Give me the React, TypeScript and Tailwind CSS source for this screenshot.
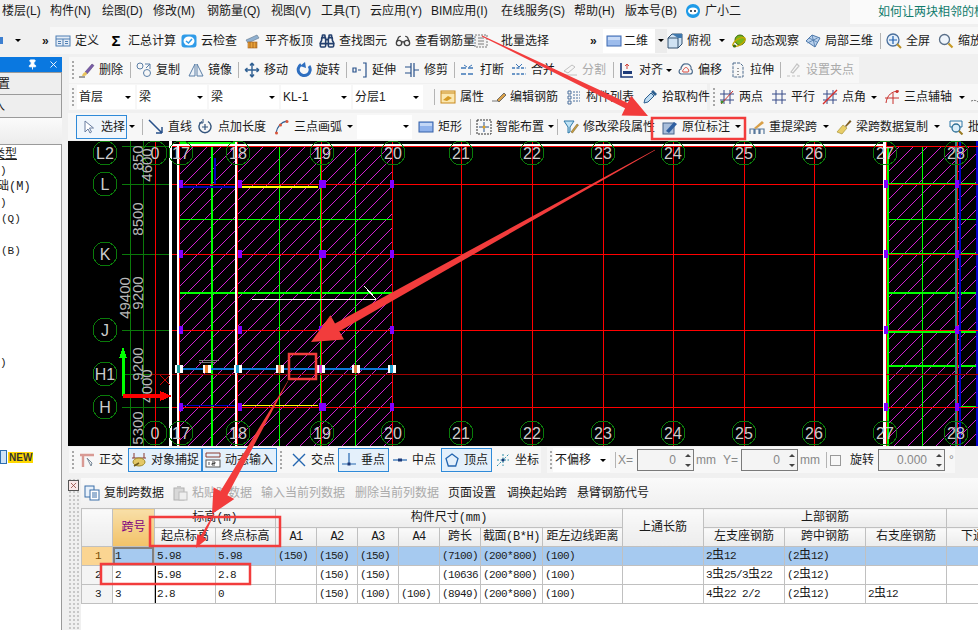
import type { ReactNode } from "react";
import { Binoculars, Glasses, Pin, X } from "lucide-react";

type ToolProps = {
  icon?: ReactNode;
  label: string;
  w: string;
  gray?: boolean;
  caret?: string;
};

const I = ({ children }: { children: ReactNode }) => (
  <svg viewBox="0 0 16 16" className="h-4 w-4 shrink-0" fill="none">
    {children}
  </svg>
);

const icons: Record<string, ReactNode> = {
  define: (
    <I>
      <rect x="1" y="3" width="14" height="10" fill="#e4ecf6" stroke="#4f7fb3" />
      <path d="M1 6h14M8 6v7M3 8.5h3M3 10.5h3M10 8.5h3M10 10.5h3" stroke="#4f7fb3" />
    </I>
  ),
  sigma: <span className="block w-4 text-center text-[15px] leading-none font-bold text-black">Σ</span>,
  cloud: (
    <I>
      <rect x="0.5" y="1.5" width="15" height="13" rx="3" fill="#2f9be8" />
      <ellipse cx="8" cy="8" rx="5.5" ry="4.5" fill="#fff" />
      <path d="M5 8l2.5 2L11 6" stroke="#2f9be8" strokeWidth="1.5" />
    </I>
  ),
  slab: (
    <I>
      <path d="M1 7l11-5 2 3-11 5z" fill="#8fb0d0" stroke="#60758c" strokeWidth="0.6" />
      <rect x="3" y="9" width="9" height="6" fill="#e8a23a" stroke="#a8611a" strokeWidth="0.6" />
      <path d="M5 9v6M8 9v6M11 9v6" stroke="#8a4a12" strokeWidth="0.6" />
    </I>
  ),
  find: <Binoculars size={16} color="#24406e" strokeWidth={2.4} className="shrink-0" />,
  glasses: <Glasses size={16} color="#444" strokeWidth={2} className="shrink-0" />,
  batch: (
    <I>
      <rect x="2" y="2" width="12" height="12" fill="#f2f2f2" stroke="#7a7a7a" strokeDasharray="2 1" />
      <path d="M5 5h6M5 8h6M5 11h6" stroke="#7a7a7a" />
    </I>
  ),
  plane: (
    <I>
      <rect x="1" y="3" width="14" height="10" fill="#9dbcec" stroke="#3c68b0" />
      <rect x="2" y="4" width="12" height="3" fill="#c9dbf6" />
    </I>
  ),
  cube: (
    <I>
      <path d="M1 5l4-4h10v10l-4 4H1z" fill="#cfe2f3" stroke="#33516f" />
      <path d="M1 5h10v10M11 5l4-4" stroke="#33516f" />
      <path d="M5 1h10v4H11z" fill="#3f78ad" />
    </I>
  ),
  orbit: (
    <I>
      <circle cx="9" cy="7" r="5" fill="#7cb518" stroke="#3d6b10" />
      <ellipse cx="8" cy="9" rx="7" ry="3" transform="rotate(-32 8 9)" stroke="#c6a700" strokeWidth="1.4" />
      <circle cx="3.5" cy="13" r="1.6" fill="#3d6b10" />
    </I>
  ),
  local3d: (
    <I>
      <path d="M1 8l6-6 8 3-5 9z" fill="#b8d0ec" stroke="#4d78aa" />
      <path d="M4 5l8 4M7 2l3 12M2.5 10l10-5" stroke="#4d78aa" strokeWidth="0.8" />
    </I>
  ),
  full: (
    <I>
      <circle cx="7" cy="7" r="6" fill="#e4effa" stroke="#4a6f9c" strokeWidth="1.3" />
      <path d="M7 3v8M3 7h8" stroke="#1f5fae" strokeWidth="1.2" />
      <path d="M11 11l4 4" stroke="#b98f25" strokeWidth="2" />
    </I>
  ),
  zoom: (
    <I>
      <circle cx="6.5" cy="6.5" r="5" fill="#eef4fb" stroke="#5a6f88" strokeWidth="1.3" />
      <path d="M10.5 10.5l4 4" stroke="#c79a24" strokeWidth="2.2" />
    </I>
  ),
  brush: (
    <I>
      <path d="M6 10l7-8 2 1.5L8 12z" fill="#7a5ca8" stroke="#4a3a70" strokeWidth="0.5" />
      <path d="M3 14c1-3 2-4 4-4l1 2c-1 2-3 2-5 2z" fill="#e8c25a" />
      <path d="M0 15h6" stroke="#444" />
    </I>
  ),
  copy: (
    <I>
      <circle cx="4" cy="4" r="3" stroke="#5a7ea6" />
      <circle cx="11" cy="11" r="3.5" stroke="#5a7ea6" />
      <path d="M9 2h5v5M14 2l-4 4" stroke="#5a7ea6" />
    </I>
  ),
  mirror: (
    <I>
      <path d="M7 2L1 14h6zM9 2l6 12H9z" stroke="#5a7ea6" fill="#eef3f9" />
    </I>
  ),
  move: (
    <I>
      <path d="M8 1v14M1 8h14M8 1L6 3.5M8 1l2 2.5M8 15l-2-2.5M8 15l2-2.5M1 8l2.5-2M1 8l2.5 2M15 8l-2.5-2M15 8l-2.5 2" stroke="#2f5f92" strokeWidth="1.4" />
    </I>
  ),
  rotate: (
    <I>
      <path d="M5 2.5A6 6 0 1 0 13 4" stroke="#2f6fc0" strokeWidth="3" />
      <path d="M9 0l1 6-6-2z" fill="#2f6fc0" />
    </I>
  ),
  extend: (
    <I>
      <path d="M1 6h3v4H1zM6 8h3M11 1h3v14h-3" stroke="#27508a" strokeWidth="1.2" />
    </I>
  ),
  trim: (
    <I>
      <path d="M1 5h6M1 11h6M7 1v14M10 1v14M10 8h5" stroke="#27508a" strokeWidth="1.2" />
    </I>
  ),
  breakIcon: (
    <I>
      <path d="M1 6h14M1 12h14" stroke="#3f78b8" strokeDasharray="5 2" strokeWidth="1.4" />
      <path d="M4 3l3 2M12 3L9 5" stroke="#3f78b8" />
    </I>
  ),
  merge: (
    <I>
      <path d="M1 6h14M1 12h14" stroke="#3f78b8" strokeDasharray="3 1.5" strokeWidth="1.4" />
      <path d="M5 2l3 3 3-3" stroke="#3f78b8" />
    </I>
  ),
  split: (
    <I>
      <path d="M1 13h14M2 9l8-6 3 2-7 6z" stroke="#c0c0c0" />
    </I>
  ),
  align: (
    <I>
      <path d="M2 1v14h12" stroke="#1d3a78" strokeWidth="1.6" />
      <rect x="4" y="9" width="9" height="3" fill="#1d3a78" />
      <path d="M8 7V2M6 4l2-2 2 2" stroke="#d2443a" />
    </I>
  ),
  offset: (
    <I>
      <path d="M3 12c-3-1-2-5 0-5 0-3 3-6 5-5 3-1 6 3 5 5 2 1 2 5-1 5z" stroke="#4c6b8c" strokeWidth="1.2" />
      <path d="M5 10c-1-1 0-2 1-3 1-2 3-2 4 0 1 1 1 3 0 3z" stroke="#d8453a" />
    </I>
  ),
  stretch: (
    <I>
      <path d="M3 1h7l3 3v11H3z" stroke="#4c6b8c" strokeDasharray="3 1" />
      <path d="M8 6v1M8 9v1M8 12v1" stroke="#333" />
    </I>
  ),
  grips: (
    <I>
      <path d="M1 14h3M6 14h3M11 14h3M5 10l6-8 2 2-6 7z" stroke="#c4c4c4" strokeWidth="1.2" />
    </I>
  ),
  props: (
    <I>
      <rect x="1" y="2" width="14" height="12" fill="#fbe7b0" stroke="#c98a1e" />
      <path d="M3 11l5-4 4 2-5 3z" fill="#d69a24" />
      <path d="M1 4h14" stroke="#c98a1e" />
    </I>
  ),
  pencil: (
    <I>
      <path d="M0 12h6M5 11l7-7 2 2-7 7z" stroke="#555" fill="#d9a048" strokeWidth="0.8" />
    </I>
  ),
  list: (
    <I>
      <path d="M2 2h3v3H2zM2 7h3v3H2zM2 12h3v3H2z" stroke="#4a6f9c" />
      <path d="M7 3h7M7 6h7M7 9h7M7 12h7" stroke="#4a6f9c" strokeDasharray="2 1" />
    </I>
  ),
  picker: (
    <I>
      <path d="M2 14l1-4 6-6 3 3-6 6z" fill="#bfdcf2" stroke="#2c5f8f" />
      <path d="M9 3l2-2 4 4-2 2z" fill="#2c5f8f" />
    </I>
  ),
  twoPoint: (
    <I>
      <path d="M5 1v14M11 1v14M1 5h14M1 11h14" stroke="#364b88" />
      <path d="M2 15L14 2" stroke="#c9302c" />
      <circle cx="3" cy="13" r="1.5" fill="#3f8f2f" />
    </I>
  ),
  parallel: (
    <I>
      <path d="M5 1v14M11 1v14M1 5h14M1 11h14" stroke="#364b88" />
    </I>
  ),
  angle: (
    <I>
      <path d="M5 1v14M11 1v14M1 5h14M1 11h14" stroke="#364b88" />
      <path d="M1 15L15 1" stroke="#d8302c" strokeWidth="1.4" />
    </I>
  ),
  arcAxis: (
    <I>
      <path d="M2 14C3 6 8 2 15 2M1 9h14M9 4v11" stroke="#c8302c" />
      <circle cx="13" cy="2.5" r="1.5" fill="#c8302c" />
    </I>
  ),
  wave: (
    <I>
      <path d="M1 12c3-1 5-1 7 1M12 5v8" stroke="#777" strokeDasharray="2 1" />
    </I>
  ),
  cursor: (
    <I>
      <path d="M4 2v11l3-3 2 4 1.5-1-2-4h4z" fill="#fff" stroke="#6a7ea0" />
    </I>
  ),
  line: (
    <I>
      <path d="M1 1l13 13M14 14H8M14 14V8" stroke="#27508a" strokeWidth="1.5" />
    </I>
  ),
  addLength: (
    <I>
      <path d="M10 2.5a6 6 0 1 1-6 0" stroke="#33547c" strokeWidth="1.4" />
      <path d="M5 0v4H1" stroke="#33547c" />
      <path d="M7 5v6M4 8h6" stroke="#33547c" strokeWidth="1.2" />
    </I>
  ),
  arc: (
    <I>
      <path d="M2 14C3 8 7 3 13 2" stroke="#2f5f92" strokeWidth="1.3" />
      <circle cx="2.5" cy="14" r="1.5" fill="#d8553a" />
      <circle cx="6.5" cy="6" r="1.5" fill="#d8553a" />
      <circle cx="13" cy="2.5" r="1.5" fill="#d8553a" />
    </I>
  ),
  rect: (
    <I>
      <rect x="1" y="3" width="14" height="10" fill="#8fb2ec" stroke="#3560a8" />
      <rect x="2" y="4" width="12" height="3" fill="#c3d7f6" />
    </I>
  ),
  smart: (
    <I>
      <rect x="1" y="1" width="14" height="14" stroke="#333" strokeDasharray="2 1" />
      <path d="M8 3v10M3 8h10" stroke="#27508a" />
      <circle cx="8" cy="8" r="1.5" fill="#e0a020" />
    </I>
  ),
  filterEdit: (
    <I>
      <path d="M1 2h10L7 8v5l-2 1V8z" fill="#bfe3f5" stroke="#2d78a8" />
      <path d="M8 13l6-8 1.5 1-6 8z" fill="#c9a040" stroke="#6b5420" strokeWidth="0.5" />
    </I>
  ),
  inplace: (
    <I>
      <rect x="1" y="4" width="11" height="11" fill="#a9bfdc" stroke="#46648c" />
      <path d="M4 12l8-9 3 2-8 9z" fill="#2f5fa0" />
    </I>
  ),
  respan: (
    <I>
      <path d="M1 15v-5h4v5M6 15v-5h4v5M11 15v-5h4v5" stroke="#58789c" strokeWidth="1.2" />
      <path d="M5 9l8-7 2 2-8 6z" fill="#d9a048" />
    </I>
  ),
  broom: (
    <I>
      <path d="M9 7l5-6 1.5 1.5L10 8z" fill="#7b5a20" />
      <path d="M1 13l6-7 4 3-5 6z" fill="#e8cd68" stroke="#a08a28" strokeWidth="0.6" />
    </I>
  ),
  batchMod: (
    <I>
      <path d="M2 2h12v6H2z" stroke="#2d78a8" />
      <circle cx="8" cy="9" r="4" fill="#dbeef9" stroke="#2d6f96" strokeWidth="1.3" />
      <path d="M11 12l3.5 3.5" stroke="#9a7a20" strokeWidth="2" />
    </I>
  ),
  ortho: (
    <I>
      <path d="M1 3h14M4 3v12" stroke="#d99a94" strokeWidth="2.4" />
      <path d="M8 6l5 5-1 3z" stroke="#7a8a9a" />
    </I>
  ),
  snap: (
    <I>
      <path d="M3 1v5M13 1v5M1 6h14" stroke="#8a3a30" />
      <ellipse cx="8" cy="10" rx="6" ry="4" fill="#e3c868" stroke="#a08a28" />
      <path d="M3 14l5-3" stroke="#6f5a1a" strokeWidth="1.5" />
    </I>
  ),
  dynamic: (
    <I>
      <path d="M1 1h14v4H1z" stroke="#8a3a30" />
      <rect x="1" y="8" width="14" height="7" fill="#fff" stroke="#555" />
      <path d="M4 10v3M7 10h3v1.5H7V13h3" stroke="#222" strokeWidth="0.8" />
    </I>
  ),
  cross: (
    <I>
      <path d="M2 2l12 12M14 2L2 14" stroke="#2466b0" strokeWidth="1.4" />
    </I>
  ),
  foot: (
    <I>
      <path d="M8 1v11M1 12h14" stroke="#2466b0" strokeWidth="1.2" />
      <rect x="6.5" y="10.5" width="3" height="3" fill="#1d3a78" />
    </I>
  ),
  mid: (
    <I>
      <path d="M1 8h14" stroke="#2466b0" strokeWidth="1.2" />
      <rect x="6" y="6.5" width="4" height="3" fill="#1d3a78" />
    </I>
  ),
  vertex: (
    <I>
      <path d="M8 2l6 4.5-2.3 7.5H4.3L2 6.5z" stroke="#2466b0" strokeWidth="1.3" />
    </I>
  ),
  coord: (
    <I>
      <path d="M2 14L14 2M2 8h12M8 2v12" stroke="#2a8fa8" strokeDasharray="2 1.5" />
      <circle cx="8" cy="8" r="1.5" fill="#1d3a78" />
    </I>
  ),
  copyDoc: (
    <I>
      <rect x="1" y="1" width="9" height="11" fill="#e8f1fb" stroke="#3a6ea8" />
      <rect x="6" y="5" width="9" height="10" fill="#fff" stroke="#3a6ea8" />
      <path d="M8 8h5M8 10h5M8 12h5" stroke="#3a6ea8" />
    </I>
  ),
  pasteDoc: (
    <I>
      <rect x="2" y="3" width="10" height="12" fill="#d8d8d8" stroke="#b0b0b0" />
      <rect x="5" y="1" width="4" height="3" fill="#c8c8c8" />
      <rect x="7" y="7" width="8" height="8" fill="#efefef" stroke="#bcbcbc" />
    </I>
  ),
};

const Caret = ({ className = "ml-[6px]" }: { className?: string }) => (
  <span className={`${className} h-0 w-0 shrink-0 border-x-[3px] border-t-[3px] border-x-transparent border-t-black`} />
);

const Sep = () => (
  <div className="flex h-full w-[6px] shrink-0 items-center">
    <div className="h-[16px] w-px bg-[#b4b4b4]" />
  </div>
);

const Grip = ({ w = "w-[10px]" }: { w?: string }) => (
  <div className={`flex h-full shrink-0 items-center pl-[3px] ${w}`}>
    <div className="h-[18px] w-[2px] bg-[repeating-linear-gradient(to_bottom,#a8a8a8_0_2px,transparent_2px_4px)]" />
  </div>
);

function Tool({ icon, label, w, gray, caret }: ToolProps) {
  return (
    <div className={`flex h-full shrink-0 items-center ${w}`}>
      {icon ? <div className="flex w-[20px] shrink-0 items-center">{icons[icon as string]}</div> : null}
      <span className={`text-[12px] leading-none whitespace-nowrap ${gray ? "text-[#aaaaaa]" : "text-[#1a1a1a]"}`}>
        {label}
      </span>
      {caret ? <Caret className={caret} /> : null}
    </div>
  );
}

const Select = ({ label, w }: { label: string; w: string }) => (
  <div className={`mr-[2px] flex h-[24px] shrink-0 items-center justify-between bg-white pr-[4px] pl-[2px] ${w}`}>
    <span className="text-[12px] leading-none">{label}</span>
    <Caret className="ml-0" />
  </div>
);

const menus = [
  ["楼层(L)", "w-[48px]"],
  ["构件(N)", "w-[52px]"],
  ["绘图(D)", "w-[51px]"],
  ["修改(M)", "w-[54px]"],
  ["钢筋量(Q)", "w-[64px]"],
  ["视图(V)", "w-[50px]"],
  ["工具(T)", "w-[49px]"],
  ["云应用(Y)", "w-[61px]"],
  ["BIM应用(I)", "w-[70px]"],
  ["在线服务(S)", "w-[73px]"],
  ["帮助(H)", "w-[51px]"],
  ["版本号(B)", "w-[60px]"],
];

const Spin = ({ value, w }: { value: string; w: string }) => (
  <div className={`flex h-[22px] shrink-0 items-center justify-end border border-[#7a7a7a] bg-[#f4f4f4] pr-[2px] ${w}`}>
    <span className="text-[12px] leading-none text-[#888888]">{value}</span>
    <div className="ml-[9px] flex flex-col gap-[7px]">
      <span className="block h-0 w-0 border-x-[3px] border-b-[3px] border-x-transparent border-b-[#444]" />
      <span className="block h-0 w-0 border-x-[3px] border-t-[3px] border-x-transparent border-t-[#444]" />
    </div>
  </div>
);

const rows = [
  ["1", "1", "5.98", "5.98", "(150)", "(150)", "(150)", "", "(7100)", "(200*800)", "(100)", "", "2虫12", "(2虫12)", "", ""],
  ["2", "2", "5.98", "2.8", "", "(150)", "(150)", "", "(10636", "(200*800)", "(100)", "", "3虫25/3虫22", "(2虫12)", "", ""],
  ["3", "3", "2.8", "0", "", "(150)", "(100)", "(100)", "(8949)", "(200*800)", "(100)", "", "4虫22 2/2", "(2虫12)", "2虫12", ""],
];

const colWidths = [
  "w-[31px]", "w-[42px]", "w-[61px]", "w-[60px]", "w-[41px]", "w-[41px]", "w-[41px]", "w-[41px]",
  "w-[41px]", "w-[62px]", "w-[80px]", "w-[81px]", "w-[81px]", "w-[81px]", "w-[81px]", "w-[32px]",
];

const th = "border border-[#c0c0c0] bg-[linear-gradient(#fafafa,#ececec)] p-0 text-center text-[12px] font-normal whitespace-nowrap overflow-hidden";

// the rebar grade sign is a full width glyph, it must not get the digits' tighter tracking
function RebarText({ text }: { text: string }) {
  const parts = text.split("虫");
  return (
    <>
      {parts.map((part, i) => (
        <span key={i}>
          {i > 0 ? <span className="text-[12px] tracking-normal">虫</span> : null}
          {part}
        </span>
      ))}
    </>
  );
}

function BeamTable() {
  return (
    <table className="w-[897px] table-fixed border-collapse font-['Liberation_Mono','Noto_Sans_CJK_SC',monospace] text-[11px] tracking-[-0.6px] text-[#1a1a1a]">
      <colgroup>
        {colWidths.map((w, i) => (
          <col key={i} className={w} />
        ))}
      </colgroup>
      <thead>
        <tr className="h-[18px]">
          <th rowSpan={2} className={th} />
          <th rowSpan={2} className="border border-[#c0c0c0] bg-[linear-gradient(#f8dfa8,#f2c268)] p-0 text-center text-[12px] font-normal tracking-normal text-[#800080]">
            跨号
          </th>
          <th colSpan={2} className={`${th} tracking-normal`}>标高(m)</th>
          <th colSpan={7} className={`${th} tracking-normal`}>构件尺寸(mm)</th>
          <th rowSpan={2} className={`${th} tracking-normal`}>上通长筋</th>
          <th colSpan={3} className={`${th} tracking-normal`}>上部钢筋</th>
          <th className={th} />
        </tr>
        <tr className="h-[19px]">
          {["起点标高", "终点标高"].map((t) => (
            <th key={t} className={`${th} tracking-normal`}>{t}</th>
          ))}
          {["A1", "A2", "A3", "A4"].map((t) => (
            <th key={t} className={`${th} text-[11px]`}>{t}</th>
          ))}
          <th className={`${th} tracking-normal`}>跨长</th>
          <th className={`${th} tracking-[-0.4px]`}>截面(B*H)</th>
          <th className={`${th} tracking-normal`}>距左边线距离</th>
          {["左支座钢筋", "跨中钢筋", "右支座钢筋"].map((t) => (
            <th key={t} className={`${th} tracking-normal`}>{t}</th>
          ))}
          <th className={`${th} pl-[14px] text-left tracking-normal`}>下通长筋</th>
        </tr>
      </thead>
      <tbody>
        {rows.map((row, r) => (
          <tr key={r} className={`h-[19px] ${r === 0 ? "bg-[#a6caf0]" : "bg-white"}`}>
            {row.map((cell, c) => {
              let cls = "border border-[#c0c0c0] overflow-hidden whitespace-nowrap p-0 pl-[2px]";
              if (c === 0) {
                cls += r === 0
                  ? " bg-[#fbd592] text-center text-[#7a4a00]"
                  : " bg-[#f4f4f4] text-center";
              }
              if (c === 1 && r === 0) cls += " shadow-[inset_0_0_0_2px_#808080]";
              if (c === 2 && r > 0) cls += " shadow-[inset_1px_0_0_#000]";
              return (
                <td key={c} className={cls}>
                  <RebarText text={cell} />
                </td>
              );
            })}
          </tr>
        ))}
      </tbody>
    </table>
  );
}

const colX = [179, 237, 321, 392, 461, 532, 603, 673, 744, 814, 886, 957];
const bubbleX = [181, 238, 322, 393, 461, 532, 603, 673, 744, 814, 885, 956];
const colLabels = ["17", "18", "19", "20", "21", "22", "23", "24", "25", "26", "27", "28"];
const bubbleRows = [
  { y: 153, label: "L2" },
  { y: 184, label: "L" },
  { y: 254, label: "K" },
  { y: 330, label: "J" },
  { y: 374, label: "H1" },
  { y: 407, label: "H" },
];
const gridRows = [184, 254, 330, 407];

// 45 degree hatch of a slab, one long diagonal every 14px
function hatchPath(x0: number, x1: number, y0: number, y1: number) {
  let d = "";
  for (let c = x0 + y0; c < x1 + y1; c += 14) {
    d += `M${c - y0} ${y0}L${c - y1} ${y1}`;
  }
  return d;
}

function Bubble({ x, y, label }: { x: number; y: number; label: string }) {
  return (
    <g>
      <circle cx={x} cy={y} r="12" fill="none" stroke="#0a7a0a" />
      <text x={x} y={y + 6} textAnchor="middle" fill="#cccccc" fontSize="16" fontFamily="'Liberation Sans',sans-serif">
        {label}
      </text>
    </g>
  );
}

const DimText = ({ x, y, t }: { x: number; y: number; t: string }) => (
  <text
    transform={`translate(${x} ${y}) rotate(-90)`}
    textAnchor="middle"
    fill="#b8b8b8"
    fontSize="15"
    fontFamily="'Liberation Sans',sans-serif"
  >
    {t}
  </text>
);

function Handle({ x, color }: { x: number; color: string }) {
  return (
    <g>
      <rect x={x - 4} y="365" width="8" height="8" fill="#fff" />
      <rect x={x - 2} y="365" width="3" height="8" fill={color} />
    </g>
  );
}

function CadCanvas() {
  return (
    <svg viewBox="68 141 910 305" shapeRendering="crispEdges" className="block h-[305px] w-[910px] shrink-0 bg-black">
      <defs>
        <clipPath id="slabA">
          <rect x="180" y="146" width="212" height="300" />
        </clipPath>
        <clipPath id="slabB">
          <rect x="886" y="146" width="92" height="300" />
        </clipPath>
      </defs>
      <path d={hatchPath(180, 392, 146, 446)} clipPath="url(#slabA)" stroke="#d020d0" strokeWidth="1" />
      <path d={hatchPath(886, 978, 146, 446)} clipPath="url(#slabB)" stroke="#d020d0" strokeWidth="1" />

      {/* dim axes */}
      <path d="M130.5 141v305M143.5 141v305M171.5 141v305" stroke="#0a7a0a" />
      <path d="M122 146.5h50M122 184.5h50M122 254.5h50M122 330.5h50M122 374.5h50M122 407.5h50" stroke="#0a7a0a" />

      {/* bright green members */}
      <g stroke="#00ff00">
        <path d="M212 146v300M321 146v300" strokeWidth="2" />
        <path d="M279.5 146v300M355.5 146v300" />
        <path d="M180 219.5h212M180 407.5h212" />
        <path d="M180 293h212" strokeWidth="2" />
        <path d="M180 143h55" strokeWidth="3" />
        <path d="M887 146v300" strokeWidth="3" />
        <path d="M922.5 146v300M957.5 146v300" />
        <path d="M886 219.5h92" />
        <path d="M886 184h92M886 254h92M886 293h92M886 366h92" strokeWidth="2" />
        <path d="M886 331h92" strokeWidth="3" />
        <path d="M886 407.5h70M957 406h21" />
      </g>

      {/* beams */}
      <path d="M215 158v26" stroke="#0000c0" strokeWidth="2" />
      <path d="M181 187h55" stroke="#0000b0" strokeWidth="2" />
      <path d="M238 187h80" stroke="#ffff00" strokeWidth="2" />
      <path d="M181 405.5h55" stroke="#0000c0" />
      <path d="M238 405.5h80" stroke="#ffff00" />
      <path d="M960 141v305" stroke="#0000d0" strokeWidth="2" />
      <path d="M977 141v305" stroke="#0000d0" strokeWidth="2" />
      <path d="M956 141v305" stroke="#2a8a7a" strokeWidth="2" />

      {/* red axes */}
      <path d="M155.5 141v305" stroke="#ff0000" />
      {colX.map((x) => (
        <path key={x} d={`M${x + 0.5} 141v305`} stroke="#ff0000" />
      ))}
      <path d="M172 146.5h806M172 184.5h806M172 254.5h806M172 330.5h806M172 407.5h806" stroke="#ff0000" />
      <path d="M150 374.5h828" stroke="#a00000" />

      {/* white walls */}
      <path d="M170 141v305M884 141v305" stroke="#fff" strokeWidth="3" />
      <path d="M178 146v300M236 141v305" stroke="#fff" strokeWidth="2" />
      <path d="M170 145h716" stroke="#fff" strokeWidth="2" />
      <path d="M252 299.5h124" stroke="#fff" />
      <path d="M364 286l12 13" stroke="#fff" />

      {/* column stubs */}
      {[181, 240, 321, 392, 886, 957].map((x) =>
        gridRows.map((y) => (
          <rect key={`${x}-${y}`} x={x - 2} y={y - 4} width={x === 321 ? 7 : 4} height="8" fill="#8000ff" />
        )),
      )}

      {/* selected beam */}
      <path d="M180 369h212" stroke="#0a78d8" strokeWidth="2" />
      <path d="M199 360.5h20M199 362.5h16" stroke="#777" />
      <Handle x={179} color="#20a0a0" />
      <Handle x={207} color="#f08030" />
      <Handle x={238} color="#20a0d0" />
      <Handle x={280} color="#e08040" />
      <Handle x={321} color="#d040d0" />
      <Handle x={356} color="#e08040" />
      <Handle x={392} color="#20a0d0" />

      {/* bubbles */}
      {bubbleX.map((x, i) => (
        <g key={x}>
          <Bubble x={x} y={153} label={colLabels[i]} />
          <Bubble x={x} y={433} label={colLabels[i]} />
        </g>
      ))}
      <Bubble x={155} y={153} label="0" />
      <Bubble x={155} y={433} label="0" />
      {bubbleRows.map((b) => (
        <Bubble key={b.label} x={105} y={b.y} label={b.label} />
      ))}

      <DimText x={143} y={158} t="850" />
      <DimText x={152} y={165} t="4600" />
      <DimText x={143} y={219} t="8500" />
      <DimText x={143} y={293} t="9200" />
      <DimText x={130} y={298} t="49400" />
      <DimText x={143} y={364} t="9200" />
      <DimText x={152} y={386} t="4000" />
      <DimText x={143} y={428} t="5300" />

      {/* axis gizmo */}
      <path d="M123 396v-40" stroke="#00ff00" strokeWidth="3" />
      <path d="M123 347l-4 11h8z" fill="#00ff00" />
      <path d="M123 396h38" stroke="#ff0000" strokeWidth="4" />
      <path d="M172 396l-12-5v10z" fill="#ff0000" />
      <path d="M160 375l10 10M170 375l-10 10" stroke="#d00000" />
    </svg>
  );
}

// tail is thin, widens up to the head, like the hand drawn marks in the picture
function arrowPoints(x1: number, y1: number, x2: number, y2: number, tail: number, body: number, head: number, len: number) {
  const d = Math.hypot(x2 - x1, y2 - y1);
  const ux = (x2 - x1) / d;
  const uy = (y2 - y1) / d;
  const nx = -uy;
  const ny = ux;
  const bx = x2 - ux * len;
  const by = y2 - uy * len;
  const pts = [
    [x1 + (nx * tail) / 2, y1 + (ny * tail) / 2],
    [bx + (nx * body) / 2, by + (ny * body) / 2],
    [bx + (nx * head) / 2, by + (ny * head) / 2],
    [x2, y2],
    [bx - (nx * head) / 2, by - (ny * head) / 2],
    [bx - (nx * body) / 2, by - (ny * body) / 2],
    [x1 - (nx * tail) / 2, y1 - (ny * tail) / 2],
  ];
  return pts.map((p) => p.join(",")).join(" ");
}

function Annotations() {
  const red = "#f23c3c";
  return (
    <svg viewBox="0 0 978 630" className="pointer-events-none absolute top-0 left-0 h-[630px] w-[978px]">
      <polygon points={arrowPoints(482, 36, 648, 116, 1, 6, 22, 24)} fill={red} />
      <polygon points={arrowPoints(655, 150, 311, 342, 0.5, 9, 28, 30)} fill={red} />
      <polygon points={arrowPoints(288, 381, 212, 514, 0.5, 8, 24, 24)} fill={red} />
      <polygon points={arrowPoints(214, 514, 196, 548, 1, 3, 11, 13)} fill={red} />
      <g fill="none" stroke={red} strokeWidth="2.5">
        <rect x="652" y="118" width="93" height="21" />
        <rect x="289" y="354" width="27" height="25" />
        <rect x="150" y="517" width="130" height="29" />
        <rect x="101" y="564" width="149" height="20" />
      </g>
    </svg>
  );
}

export default function App() {
  return (
    <div className="relative flex h-[630px] w-[978px] flex-col overflow-hidden bg-[#f0f0f0] font-['Liberation_Sans','Noto_Sans_CJK_SC',sans-serif] text-[12px] text-[#1a1a1a]">
      {/* menu bar */}
      <div className="flex h-[27px] shrink-0">
        <div className="flex h-[21px] flex-1 items-center pl-[2px]">
          {menus.map(([label, w]) => (
            <span key={label} className={`${w} shrink-0 whitespace-nowrap`}>{label}</span>
          ))}
          <svg viewBox="0 0 16 16" className="mr-[4px] h-4 w-4 shrink-0">
            <path d="M8 1c4 0 7 3 7 7 0 3-2 7-7 7s-7-4-7-7c0-4 3-7 7-7z" fill="#1e9be8" />
            <ellipse cx="8" cy="8" rx="5" ry="3.5" fill="#fff" />
            <circle cx="6" cy="8" r="1" fill="#123" />
            <circle cx="10" cy="8" r="1" fill="#123" />
          </svg>
          <span>广小二</span>
        </div>
        <div className="flex h-[24px] w-[128px] shrink-0 items-center overflow-hidden bg-[#fafafa] pl-[28px] whitespace-nowrap text-[#0f7a6c]">
          如何让两块相邻的板
        </div>
      </div>

      {/* main toolbar */}
      <div className="flex h-[27px] shrink-0 items-center">
        <div className="flex h-full w-[50px] shrink-0 items-center">
          <span className="h-full w-[3px] rounded-r bg-[#3d7fd0] [clip-path:inset(10px_0_10px_0)]" />
          <Caret className="ml-[12px]" />
          <span className="ml-[21px] text-[12px] leading-none font-bold">»</span>
        </div>
        <div className="flex h-full w-[551px] shrink-0 items-center bg-[#f7f7f7] pl-[5px]">
          <Tool icon="define" label="定义" w="w-[53px]" />
          <Tool icon="sigma" label="汇总计算" w="w-[73px]" />
          <Tool icon="cloud" label="云检查" w="w-[64px]" />
          <Tool icon="slab" label="平齐板顶" w="w-[74px]" />
          <Tool icon="find" label="查找图元" w="w-[76px]" />
          <Tool icon="glasses" label="查看钢筋量" w="w-[78px]" />
          <div className="flex h-full w-[28px] shrink-0 items-center">{icons.batch}</div>
          <span className="text-[12px] leading-none">批量选择</span>
          <span className="ml-[41px] text-[12px] leading-none font-bold">»</span>
        </div>
        <div className="flex h-full flex-1 items-center bg-[#f7f7f7] pl-[2px]">
          <div className="flex h-[24px] w-[52px] shrink-0 items-center bg-white pl-[3px]">
            <div className="flex w-[18px] shrink-0 items-center">{icons.plane}</div>
            <span className="leading-none">二维</span>
          </div>
          <div className="flex h-[24px] w-[12px] shrink-0 items-center bg-[#ececec] pl-[3px]">
            <Caret className="ml-0" />
          </div>
          <Tool icon="cube" label="俯视" w="w-[64px]" caret="ml-[8px]" />
          <Tool icon="orbit" label="动态观察" w="w-[74px]" />
          <Tool icon="local3d" label="局部三维" w="w-[75px]" />
          <Sep />
          <Tool icon="full" label="全屏" w="w-[52px]" />
          <Tool icon="zoom" label="缩放" w="w-[36px]" />
        </div>
      </div>

      <div className="flex min-h-0 flex-1 pt-[3px]">
        {/* left panel, the text is cut by the panel's left edge */}
        <div className="flex w-[62px] shrink-0 flex-col overflow-hidden">
          <div className="flex h-[15px] shrink-0 items-center justify-end gap-[10px] bg-[#0a78e0] pr-[3px]">
            <Pin size={11} color="#fff" fill="#fff" />
            <X size={11} color="#fff" />
          </div>
          <div className="flex h-[23px] shrink-0 items-center border border-l-0 border-[#9a9a9a] bg-[#eeeeee] leading-none">
            <span className="-ml-[2px]">置</span>
          </div>
          <div className="flex h-[23px] shrink-0 items-center border border-t-0 border-l-0 border-[#9a9a9a] bg-[#eeeeee] leading-none">
            <span className="-ml-[7px]">入</span>
          </div>
          <div className="h-[26px] shrink-0 bg-[linear-gradient(#fbfbfb,#ececec)]" />
          <div className="flex-1 overflow-hidden border-t border-r border-[#9a9a9a] bg-white pt-[2px] font-['Liberation_Mono','Noto_Sans_CJK_SC',monospace] text-[11px] leading-[16px] text-[#222]">
            <div className="-ml-[7px] h-[16px] text-[12px] underline">类型</div>
            <div className="h-[16px]">)</div>
            <div className="-ml-[3px] h-[16px] text-[12px] whitespace-nowrap">础(M)</div>
            <div className="h-[16px]">)</div>
            <div className="h-[16px] pl-[1px]">(Q)</div>
            <div className="h-[16px]" />
            <div className="h-[16px] pl-[1px]">(B)</div>
            <div className="h-[96px]" />
            <div className="h-[16px]">)</div>
            <div className="h-[78px]" />
            <div className="flex h-[16px] items-center">
              <div className="h-[14px] w-[7px] border border-[#2f6fb0] bg-[#cfe3f7]" />
              <span className="ml-px bg-[#ffd800] px-px font-['Liberation_Sans',sans-serif] text-[10px] leading-[11px] font-bold tracking-normal text-[#333]">NEW</span>
            </div>
          </div>
        </div>

        <div className="flex w-[6px] shrink-0" />

        {/* right column */}
        <div className="flex w-[910px] shrink-0 flex-col">
          <div className="ml-px flex h-[26px] w-[790px] shrink-0 items-center bg-[#f7f7f7]">
            <Grip />
            <Tool icon="brush" label="删除" w="w-[51px]" />
            <Sep />
            <Tool icon="copy" label="复制" w="w-[52px]" />
            <Tool icon="mirror" label="镜像" w="w-[50px]" />
            <Sep />
            <Tool icon="move" label="移动" w="w-[52px]" />
            <Tool icon="rotate" label="旋转" w="w-[50px]" />
            <Sep />
            <Tool icon="extend" label="延伸" w="w-[52px]" />
            <Tool icon="trim" label="修剪" w="w-[50px]" />
            <Sep />
            <Tool icon="breakIcon" label="打断" w="w-[51px]" />
            <Tool icon="merge" label="合并" w="w-[51px]" />
            <Tool icon="split" label="分割" w="w-[51px]" gray />
            <Sep />
            <Tool icon="align" label="对齐" w="w-[59px]" caret="ml-[3px]" />
            <Tool icon="offset" label="偏移" w="w-[52px]" />
            <Tool icon="stretch" label="拉伸" w="w-[50px]" />
            <Sep />
            <Tool icon="grips" label="设置夹点" w="w-[70px]" gray />
          </div>

          <div className="mt-px flex h-[26px] shrink-0">
            <div className="ml-px flex h-full w-[638px] shrink-0 items-center bg-[#f7f7f7]">
              <Grip w="w-[8px]" />
              <Select label="首层" w="w-[58px]" />
              <Select label="梁" w="w-[70px]" />
              <Select label="梁" w="w-[70px]" />
              <Select label="KL-1" w="w-[70px]" />
              <Select label="分层1" w="w-[70px]" />
              <div className="w-[9px] shrink-0" />
              <Sep />
              <Tool icon="props" label="属性" w="w-[54px]" />
              <div className="flex h-full w-[72px] shrink-0 items-center">
                <div className="-ml-[2px] w-[18px] shrink-0">{icons.pencil}</div>
                <span className="leading-none">编辑钢筋</span>
              </div>
              <Tool icon="list" label="构件列表" w="w-[76px]" />
              <Tool icon="picker" label="拾取构件" w="w-[70px]" />
            </div>
            <div className="ml-[3px] flex h-full flex-1 items-center overflow-hidden bg-[#f7f7f7]">
              <Grip w="w-[9px]" />
              <Tool icon="twoPoint" label="两点" w="w-[52px]" />
              <Tool icon="parallel" label="平行" w="w-[51px]" />
              <Tool icon="angle" label="点角" w="w-[62px]" caret="ml-[5px]" />
              <Tool icon="arcAxis" label="三点辅轴" w="w-[86px]" caret="ml-[7px]" />
              <Tool icon="wave" label="" w="w-[8px]" />
            </div>
          </div>

          <div className="mt-[3px] flex h-[27px] shrink-0 items-center bg-[#f7f7f7] pl-[8px]">
            <div className="flex h-[24px] w-[51px] shrink-0 items-center border border-[#2f8ad8] bg-[#f0f6fc] pl-[4px]">
              <div className="w-[20px] shrink-0">{icons.cursor}</div>
              <span className="leading-none">选择</span>
            </div>
            <Caret className="ml-[2px]" />
            <div className="w-[7px] shrink-0" />
            <Sep />
            <Tool icon="line" label="直线" w="w-[50px]" />
            <Tool icon="addLength" label="点加长度" w="w-[76px]" />
            <Tool icon="arc" label="三点画弧" w="w-[83px]" caret="ml-[5px]" />
            <div className="flex h-[24px] w-[55px] shrink-0 items-center justify-end bg-white pr-[3px]">
              <Caret className="ml-0" />
            </div>
            <div className="w-[6px] shrink-0" />
            <Tool icon="rect" label="矩形" w="w-[52px]" />
            <Sep />
            <Tool icon="smart" label="智能布置" w="w-[81px]" caret="ml-[4px]" />
            <Sep />
            <Tool icon="filterEdit" label="修改梁段属性" w="w-[99px]" />
            <Tool icon="inplace" label="原位标注" w="w-[87px]" caret="ml-[5px]" />
            <Tool icon="respan" label="重提梁跨" w="w-[87px]" caret="ml-[6px]" />
            <Tool icon="broom" label="梁跨数据复制" w="w-[112px]" caret="ml-[6px]" />
            <Tool icon="batchMod" label="批" w="w-[30px]" />
          </div>

          <div className="mt-px shrink-0">
            <CadCanvas />
          </div>

          {/* snap bar */}
          <div className="mt-px flex h-[26px] shrink-0 items-center">
            <div className="ml-px flex h-full w-[472px] shrink-0 items-center bg-[#f7f7f7]">
              <Grip />
              <Tool icon="ortho" label="正交" w="w-[49px]" />
              <div className="flex h-[24px] w-[74px] shrink-0 items-center border border-[#2f8ad8] bg-[#e4f0fb] pl-[2px]">
                <div className="w-[20px] shrink-0">{icons.snap}</div>
                <span className="leading-none">对象捕捉</span>
              </div>
              <div className="flex h-[24px] w-[75px] shrink-0 items-center border border-[#2f8ad8] bg-[#e4f0fb] pl-[2px]">
                <div className="w-[20px] shrink-0">{icons.dynamic}</div>
                <span className="leading-none">动态输入</span>
              </div>
              <Grip w="w-[14px]" />
              <Tool icon="cross" label="交点" w="w-[47px]" />
              <div className="flex h-[24px] w-[51px] shrink-0 items-center border border-[#2f8ad8] bg-[#e4f0fb] pl-[2px]">
                <div className="w-[20px] shrink-0">{icons.foot}</div>
                <span className="leading-none">垂点</span>
              </div>
              <div className="w-[3px] shrink-0" />
              <Tool icon="mid" label="中点" w="w-[49px]" />
              <div className="flex h-[24px] w-[51px] shrink-0 items-center border border-[#2f8ad8] bg-[#e4f0fb] pl-[2px]">
                <div className="w-[20px] shrink-0">{icons.vertex}</div>
                <span className="leading-none">顶点</span>
              </div>
              <div className="w-[3px] shrink-0" />
              <Tool icon="coord" label="坐标" w="w-[46px]" />
            </div>
            <div className="ml-[6px] flex h-full w-[408px] shrink-0 items-center bg-[#f7f7f7] text-[#888888]">
              <Grip w="w-[6px]" />
              <div className="flex h-[24px] w-[57px] shrink-0 items-center justify-between bg-white pr-[4px] pl-[2px] text-[#1a1a1a]">
                <span className="leading-none">不偏移</span>
                <Caret className="ml-0" />
              </div>
              <div className="ml-[5px] h-[16px] w-px shrink-0 bg-[#b4b4b4]" />
              <span className="ml-[2px] w-[19px] shrink-0">X=</span>
              <Spin value="0" w="w-[57px]" />
              <span className="ml-[2px] w-[27px] shrink-0">mm</span>
              <span className="w-[18px] shrink-0">Y=</span>
              <Spin value="0" w="w-[57px]" />
              <span className="ml-[2px] w-[26px] shrink-0">mm</span>
              <div className="h-[16px] w-px shrink-0 bg-[#b4b4b4]" />
              <div className="ml-[3px] h-[11px] w-[11px] shrink-0 border border-[#999]" />
              <span className="ml-[9px] w-[28px] shrink-0 text-[#1a1a1a]">旋转</span>
              <Spin value="0.000" w="w-[67px]" />
              <span className="ml-[4px]">°</span>
            </div>
          </div>

          {/* span table panel */}
          <div className="mt-[5px] flex min-h-0 flex-1">
            <div className="relative w-[13px] shrink-0 bg-[radial-gradient(#c8c8c8_1px,transparent_1px)] bg-[length:4px_4px]">
              <div className="absolute top-[2px] left-0 flex h-[11px] w-[11px] items-center justify-center border border-[#555] bg-[#f8e8e8]">
                <X size={9} color="#8a3a30" strokeWidth={2} />
              </div>
            </div>
            <div className="flex min-w-0 flex-1 flex-col bg-white">
              <div className="flex h-[30px] shrink-0 items-center bg-[linear-gradient(#fafafa,#f0f0f0)] pl-[3px]">
                <Tool icon="copyDoc" label="复制跨数据" w="w-[88px]" />
                <Tool icon="pasteDoc" label="粘贴跨数据" w="w-[89px]" gray />
                <Tool label="输入当前列数据" w="w-[94px]" gray />
                <Tool label="删除当前列数据" w="w-[93px]" gray />
                <Tool label="页面设置" w="w-[59px]" />
                <Tool label="调换起始跨" w="w-[70px]" />
                <Tool label="悬臂钢筋代号" w="w-[72px]" />
              </div>
              <BeamTable />
            </div>
          </div>
        </div>
      </div>

      <Annotations />
    </div>
  );
}
